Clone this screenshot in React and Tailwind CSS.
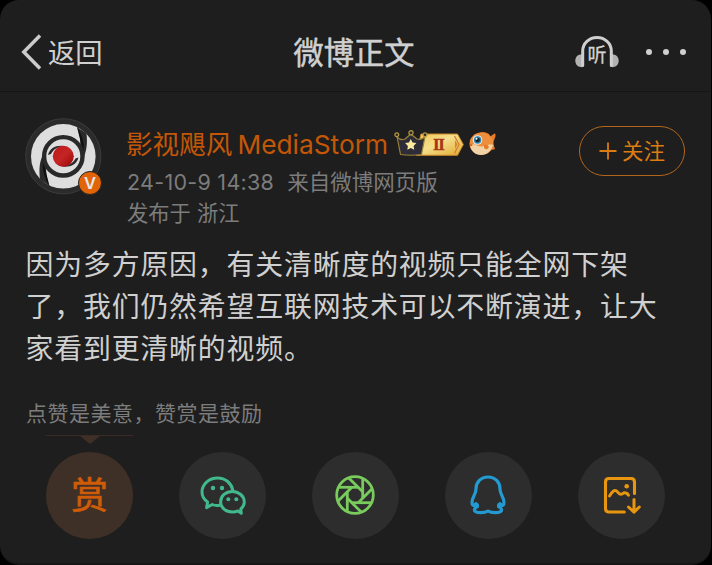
const angles = [0, 45, 90, 135, 180, 225, 270, 315];

function BackIcon() {
  return (
    <svg width="20" height="36" viewBox="0 0 20 36" fill="none" stroke="#cbcbcb" strokeWidth="3.500">
      <path d="M19 1.600 2.800 18 19 34.400" />
    </svg>
  );
}

function ListenIcon() {
  return (
    <span className="relative block h-[32px] w-[44px]">
      <svg width="44" height="32" viewBox="0 0 44 32" fill="none">
        <path d="M7 18.200C3 18.200.3 21 .3 24.700S3 31.200 7 31.200ZM37 18.200c4 0 6.700 2.800 6.700 6.500s-2.700 6.500-6.700 6.500Z" fill="#b2b2b2" />
        <path d="M7.700 29.500V15C7.700 7.200 14.200 1.500 22 1.500S36.300 7.200 36.300 15v14.500" stroke="#cfcfcf" strokeWidth="3" strokeLinecap="round" />
      </svg>
      <span className="absolute left-[12.500px] top-[10px] text-[19px] leading-[20px] text-[#d2d2d2] [-webkit-text-stroke:0.3px_#d2d2d2]">听</span>
    </span>
  );
}

function Avatar() {
  return (
    <div className="relative h-[77px] w-[77px] shrink-0">
      <svg width="77" height="77" viewBox="0 0 77 77">
        <defs>
          <linearGradient id="lens" x1="0" y1="0" x2="1" y2="1">
            <stop offset="0" stopColor="#c01818" />
            <stop offset=".5" stopColor="#c52525" />
            <stop offset="1" stopColor="#960505" />
          </linearGradient>
        </defs>
        <circle cx="38.300" cy="38.300" r="37.600" fill="#2b2b2b" stroke="#3c3c3c" />
        <circle cx="38.300" cy="38.300" r="32.300" fill="#dedede" />
        <path d="M52 9 61.500 15.500C62.500 25 62 33 57.500 42L55 31C56 22 54.500 15 52 9Z" fill="#2a2a2a" />
        <path d="M52 9C57 17 60 26 58.500 38 57 26 54 18 52 9Z" fill="#0f0f0f" />
        <path d="M24.500 68 15 61.500C14 52 14 43 19 35L21.500 46C20.500 55 22 62 24.500 68Z" fill="#2a2a2a" />
        <path d="M24.500 68C19.500 60 16.500 51 18 39 19.500 51 22.500 59 24.500 68Z" fill="#0f0f0f" />
        <circle cx="38.300" cy="38.300" r="19.200" fill="none" stroke="#292929" strokeWidth="4.400" />
        <path d="M23 37C25 29.500 32 26.500 41 28.300 33 28.500 28.500 31 26 36ZM53.500 39.500C51.500 47 44.500 50 35.500 48.300 43.500 48 48 45.500 50.500 40.500Z" fill="#292929" />
        <circle cx="38.300" cy="38.300" r="10.500" fill="url(#lens)" />
      </svg>
      <span className="absolute left-[53px] top-[53px] flex h-[24px] w-[24px] items-center justify-center rounded-full border border-[#222] bg-[#e26408] font-[Inter] text-[16.500px] font-semibold leading-none text-[#e8e8e8]">
        V
      </span>
    </div>
  );
}

function VipBadge() {
  return (
    <span className="relative block h-[27px] w-[70px]">
      <svg width="70" height="27" viewBox="0 0 70 27">
        <defs>
          <linearGradient id="gold" x1="0" y1="0" x2="1" y2="1">
            <stop offset="0" stopColor="#f0c455" />
            <stop offset=".45" stopColor="#f4df8c" />
            <stop offset="1" stopColor="#e2a82e" />
          </linearGradient>
        </defs>
        <path d="M27 4H63.500L69.300 14.500 63.500 25.300H22Z" fill="url(#gold)" stroke="#c9862a" strokeWidth="1" />
        <path d="m60.500 6 4.600 8.500-4.600 8.700" fill="none" stroke="#cc8131" strokeWidth="1.300" />
        <path d="m61 10 2.500 4.500L61 19Z" fill="#d7842f" />
        <path d="M3 6.500C5 9.500 8.500 10 11 9L16.800 4 23 9C26 10 28.500 9.500 31 6.500L27.500 24.500Q17 26 6.500 24.500Z" fill="#2e2c36" stroke="#9a813a" strokeWidth="1.200" strokeLinejoin="round" />
        <g fill="#2b2930" stroke="#b79a45" strokeWidth="1.200">
          <circle cx="2.800" cy="4.800" r="1.900" />
          <circle cx="17" cy="2.800" r="2.100" />
          <circle cx="31" cy="4.800" r="1.900" />
        </g>
        <path d="m16.800 9 1.700 3.500 3.900.6-2.800 2.800.6 3.900-3.400-1.900-3.500 1.900.6-3.900-2.800-2.800 3.900-.6Z" fill="#fbe9a0" />
      </svg>
      <span className="absolute left-[39px] top-[6px] font-['Liberation_Serif',serif] text-[17px] font-bold leading-[17px] tracking-[-1.500px] text-[#a83415] [-webkit-text-stroke:0.3px_#a83415]">II</span>
    </span>
  );
}

function FishIcon() {
  return (
    <svg width="27" height="25" viewBox="0 0 27 25">
      <path d="M19 7 25.500 2.500Q27 2.500 26.300 6L24 12 26 18Q23 20 20 17Z" fill="#e87b27" />
      <path d="M8 3Q14-1 20 3L22 8Z" fill="#df6b1c" />
      <ellipse cx="12.500" cy="12.700" rx="12" ry="11.200" fill="#ed8e3c" />
      <path d="M1 14C5 11 10 17 15 15 19 14 21 13 24 14 22 20 18 24 12 24 6 24 2 20 1 14Z" fill="#f2d3a8" />
      <circle cx="8.500" cy="9" r="4.800" fill="#e6eef0" />
      <circle cx="8.600" cy="9" r="3.700" fill="#2b81ac" />
      <circle cx="8.600" cy="9" r="2.200" fill="#10202b" />
      <circle cx="7.500" cy="7.700" r="1" fill="#fff" />
      <path d="M15 14q4-1 5 2-2 4-5 1Z" fill="#e77c27" />
      <circle cx="2.200" cy="14" r="1.300" fill="#d66b22" />
    </svg>
  );
}

function WechatIcon() {
  return (
    <svg className="ml-px" width="46" height="40" viewBox="0 0 46 40" fill="none" stroke="#42b88d" strokeWidth="3" strokeLinejoin="round" strokeLinecap="round">
      <path d="M19.500 30.300Q15.500 31 12.200 29.500L6.600 32.600 7.600 27C4 24.500 2 21 2 17 2 9.200 9 3 17.500 3 25.500 3 31.500 8.300 32.800 15.300" />
      <path d="M32.300 16.500C25.800 16.500 20.600 21 20.600 26.900S25.800 37 32.300 37Q35.300 37 37.800 36L41.300 38.300 40.800 34C43.200 32 44.300 29.700 44.300 26.900 44.300 21 38.800 16.500 32.300 16.500Z" />
      <g fill="#42b88d" stroke="none">
        <circle cx="13" cy="13" r="2.200" />
        <circle cx="22" cy="13" r="2.200" />
        <circle cx="28.300" cy="24.200" r="2" />
        <circle cx="36.300" cy="24.200" r="2" />
      </g>
    </svg>
  );
}

function MomentsIcon() {
  return (
    <svg className="mr-[2px]" width="40" height="40" viewBox="-20 -20 40 40" fill="none" stroke="#78cb5c" strokeWidth="2.800">
      <circle r="18.300" />
      {angles.map((a) => (
        <path key={a} d="M-16.500-7.700H3.200" transform={`rotate(${a})`} />
      ))}
    </svg>
  );
}

function QQIcon() {
  return (
    <svg className="mr-[2px]" width="36" height="40" viewBox="0 0 36 40" fill="none" stroke="#239bd2" strokeWidth="3.200" strokeLinejoin="round" strokeLinecap="round">
      <path d="M18 2C10.800 2 6 7.300 6 14 6 19.500 2 22 2 27.500 2 29.700 3 31 4.500 30.200L6 28.700 7.300 31.500C4.800 32.800 4 34.700 4.700 35.800 6 38.200 14.500 38.200 18 36 21.500 38.200 30 38.200 31.300 35.800 32 34.700 31.200 32.800 28.700 31.500L30 28.700 31.500 30.200C33 31 34 29.700 34 27.500 34 22 30 19.500 30 14 30 7.300 25.200 2 18 2Z" />
      <circle cx="6.200" cy="30.500" r="1.200" fill="#239bd2" />
      <circle cx="29.800" cy="30.500" r="1.200" fill="#239bd2" />
    </svg>
  );
}

function SaveImageIcon() {
  return (
    <svg width="38" height="38" viewBox="0 0 38 38" fill="none" stroke="#e8950f" strokeWidth="3.100" strokeLinecap="round" strokeLinejoin="round">
      <path d="M21.300 36H6Q2.500 36 2.500 32.500V6Q2.500 2.500 6 2.500H28Q31.500 2.500 31.500 6V17.500" />
      <path d="M6.500 20C8.500 17 9.800 14.500 12 14.500 14.500 14.500 15.500 18.300 17.700 18.300 19.700 18.300 19.700 16.800 21.500 16.800 23.500 16.800 24.800 18 25.500 19.300" strokeWidth="2.900" />
      <circle cx="23.700" cy="10.200" r="2.300" fill="#e8950f" stroke="none" />
      <path d="M31 23.500V35.500M25.500 31 31 36.200 36.300 31" strokeWidth="3" />
    </svg>
  );
}

function Action({ children, tone = "bg-[#2d2d2d]" }) {
  return <div className={`flex h-[87px] w-[87px] items-center justify-center rounded-full ${tone}`}>{children}</div>;
}

export default function App() {
  return (
    <div className="h-[565px] w-[712px] overflow-hidden whitespace-nowrap bg-black font-[Inter,'Noto_Sans_CJK_SC',sans-serif] text-[#d0d0d0]">
      <div className="flex h-[565px] w-[711px] flex-col rounded-[19px] border-b-2 border-[#161616] bg-[#1e1e1e]">
        <header className="grid h-[92px] shrink-0 grid-cols-3 items-center border-b border-[#151515] pt-[12px] pl-[21px] pr-[25px]">
          <div className="flex items-center gap-[7px]">
            <BackIcon />
            <span className="pt-[4px] text-[27.300px] leading-[36px]">返回</span>
          </div>
          <h1 className="pl-px pt-[3px] text-center text-[30.200px] leading-[40px] [-webkit-text-stroke:0.500px_#d0d0d0]">微博正文</h1>
          <div className="flex items-center justify-end gap-[27px]">
            <ListenIcon />
            <div className="flex gap-[11px]">
              <i className="size-[6px] rounded-full bg-[#d0d0d0]" />
              <i className="size-[6px] rounded-full bg-[#d0d0d0]" />
              <i className="size-[6px] rounded-full bg-[#d0d0d0]" />
            </div>
          </div>
        </header>

        <section className="flex h-[146px] shrink-0 items-start pl-[25px] pr-[26px] pt-[26px]">
          <Avatar />
          <div className="ml-[24px] flex-1">
            <div className="flex h-[49px] items-center text-[#c45707]">
              <span className="pt-[4px] text-[26.600px]">影视飓风</span>
              <span className="ml-[5px] pt-[4px] text-[26.300px]">MediaStorm</span>
              <span className="ml-[6px] pt-[2px]"><VipBadge /></span>
              <span className="ml-[5px] pt-[2px]"><FishIcon /></span>
            </div>
            <div className="flex gap-[13px] pl-px text-[21.500px] leading-[31px] text-[#7c7c7c]">
              <span className="tracking-[0.280px]">24-10-9 14:38</span>
              <span>来自微博网页版</span>
            </div>
            <div className="pl-px text-[21.300px] leading-[31px] text-[#7c7c7c]">发布于 浙江</div>
          </div>
          <button className="mt-[8px] flex h-[50px] w-[106px] items-center justify-center gap-[5px] rounded-[25px] border border-[#b3661b] text-[21.500px] text-[#dc7c12]">
            <svg width="18" height="18" viewBox="0 0 18 18" stroke="#dc7c12" strokeWidth="1.800">
              <path d="M9 .5v17M.5 9h17" />
            </svg>
            <span className="pt-px">关注</span>
          </button>
        </section>

        <p className="shrink-0 pl-[25.500px] pt-[7px] text-[27.900px] leading-[41.800px] tracking-[0.830px]">
          因为多方原因，有关清晰度的视频只能全网下架<br />
          了，我们仍然希望互联网技术可以不断演进，让大<br />
          家看到更清晰的视频。
        </p>
        <p className="mt-[28.600px] shrink-0 pl-[26px] text-[21px] leading-[30px] tracking-[0.500px] text-[#7c7c7c]">点赞是美意，赞赏是鼓励</p>

        <div className="ml-[46px] mt-[6px] flex h-[9px] w-[87px] shrink-0 flex-col items-center border-t border-[#3a2a23]">
          <svg width="20" height="8" viewBox="0 0 20 8">
            <path d="M0 0h20l-10 8z" fill="#3f2f26" />
          </svg>
        </div>
        <nav className="mt-[8px] flex shrink-0 justify-between pl-[46px] pr-[46px]">
          <Action tone="bg-[#3f3027]">
            <span className="text-[37px] leading-[37px] text-[#d05c07] [-webkit-text-stroke:0.600px_#d05c07]">赏</span>
          </Action>
          <Action><WechatIcon /></Action>
          <Action><MomentsIcon /></Action>
          <Action><QQIcon /></Action>
          <Action><SaveImageIcon /></Action>
        </nav>
      </div>
    </div>
  );
}
